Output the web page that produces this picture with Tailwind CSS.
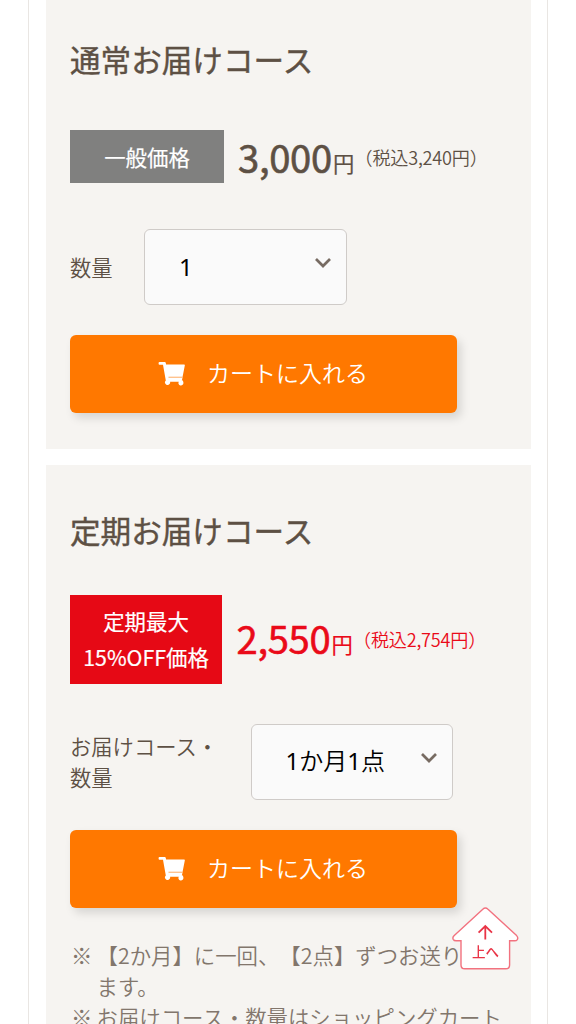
<!DOCTYPE html>
<html lang="ja">
<head>
    <meta charset="UTF-8">
    <meta name="viewport" content="width=device-width, initial-scale=1.0">
    <title>お届けコース</title>
    <script src="https://cdn.jsdelivr.net/npm/@tailwindcss/browser@4"></script>
</head>
<body class="bg-white text-[#5d5044] font-['Noto_Sans_CJK_JP',sans-serif] font-[350] [text-spacing-trim:space-all] overflow-hidden">
    <main class="h-[1024px] ml-7 w-[520px] border-x border-[#e9e6e3] px-[16.5px] overflow-hidden">
        <section class="h-[449px] bg-[#f6f4f1] pl-[24.5px] pt-[37px]">
            <h2 class="text-[30.6px] leading-[44px] font-normal [-webkit-text-stroke:0.4px_#5d5044] whitespace-nowrap">通常お届けコース</h2>
            <div class="flex items-center mt-[49px] h-[53px] whitespace-nowrap">
                <div class="w-[154px] h-[53px] pt-px bg-[#80807f] text-white text-[21.4px] font-normal [-webkit-text-stroke:0.2px_white] flex items-center justify-center">一般価格</div>
                <p class="ml-[14px] pt-2 flex items-baseline leading-[53px]">
                    <span class="w-[95px] text-[38.2px] font-normal tracking-[-0.3px] [-webkit-text-stroke:0.6px]">3,000</span>
                    <span class="w-[20.5px] text-[21.3px] font-normal relative -top-px [-webkit-text-stroke:0.2px]">円</span>
                    <span class="text-[18.1px] relative left-px -top-[8px] tracking-[-0.2px]">（税込3,240円）</span>
                </p>
            </div>
            <div class="flex items-center mt-[46px]">
                <label class="w-[74px] text-[21.3px] leading-[31px] pb-0.5">数量</label>
                <button class="w-[202.5px] h-[76px] bg-[#fafafa] border border-[#cfcbc8] rounded-[6px] pl-[34px] pr-[14px] flex items-center justify-between text-black text-2xl font-normal font-['Noto_Sans','Noto_Sans_CJK_JP',sans-serif]">
                    <span>1</span>
                    <svg class="w-[18px] h-[12px] mb-2" viewBox="0 0 18 12" fill="none" stroke="#776b62" stroke-width="2.7"><path d="M2 2l7 7 7-7"/></svg>
                </button>
            </div>
            <button class="mt-[30px] w-[387px] h-[78px] bg-[#ff7800] rounded-[6px] shadow-[4px_5px_10px_rgba(0,0,0,0.13)] text-white text-[23px] flex items-center pl-[88px]">
                <svg class="w-7 h-[25px] mr-[21px] mb-0.5" viewBox="0 0 28 25" fill="#fff"><path d="M1.5 1H6.8Q7.6 1 7.8 2L8.1 3.6H26.2Q27 3.6 26.8 4.6L24.8 14.8Q24.6 15.6 23.8 15.6H10.4L11 19H23.6Q25.5 19.4 25.4 21.7A2.5 2.5 0 1 1 20.8 20.7H12.1A2.6 2.6 0 1 1 7.8 19.4L5 3.8H1.5Q.6 3.8.6 2.8V1.9Q.6 1 1.5 1Z"/><path d="M9.7 15.3H24.8L24 19H10.4Z"/><path d="M10.5 16.4H24.4" stroke="#ff7800" stroke-width=".5"/></svg>
                <span class="pb-[3px]">カートに入れる</span>
            </button>
        </section>

        <section class="mt-4 h-[600px] bg-[#f6f4f1] pl-[24.5px] pt-[43px]">
            <h2 class="text-[30.6px] leading-[44px] font-normal [-webkit-text-stroke:0.4px_#5d5044] whitespace-nowrap">定期お届けコース</h2>
            <div class="flex items-center mt-[43px] h-[89px] whitespace-nowrap">
                <div class="w-[152px] h-[89px] pb-0.5 bg-[#e60915] text-white text-[21.4px] leading-[36px] font-normal [-webkit-text-stroke:0.2px_white] text-center flex flex-col justify-center">
                    <span>定期最大</span>
                    <span>15%OFF価格</span>
                </div>
                <p class="ml-[14.5px] pt-1 flex items-baseline leading-[53px] text-[#ea0a19]">
                    <span class="w-[95px] text-[38.2px] font-normal tracking-[-0.3px] [-webkit-text-stroke:0.6px]">2,550</span>
                    <span class="w-[20.5px] text-[21.3px] font-normal relative -top-px [-webkit-text-stroke:0.2px]">円</span>
                    <span class="text-[18.1px] relative left-px -top-[7px] tracking-[-0.2px]">（税込2,754円）</span>
                </p>
            </div>
            <div class="flex items-center mt-[40px]">
                <label class="w-[180.5px] text-[21.3px] leading-[31px] pb-0.5">お届けコース・<br>数量</label>
                <button class="w-[202.5px] h-[76px] bg-[#fafafa] border border-[#cfcbc8] rounded-[6px] pl-[34px] pr-[14px] pb-0.5 flex items-center justify-between text-black text-2xl font-normal font-['Noto_Sans','Noto_Sans_CJK_JP',sans-serif]">
                    <span>1<span class="font-[350]">か月</span>1<span class="font-[350]">点</span></span>
                    <svg class="w-[18px] h-[12px] mb-1.5" viewBox="0 0 18 12" fill="none" stroke="#776b62" stroke-width="2.7"><path d="M2 2l7 7 7-7"/></svg>
                </button>
            </div>
            <button class="mt-[30px] w-[387px] h-[78px] bg-[#ff7800] rounded-[6px] shadow-[4px_5px_10px_rgba(0,0,0,0.13)] text-white text-[23px] flex items-center pl-[88px]">
                <svg class="w-7 h-[25px] mr-[21px] mb-0.5" viewBox="0 0 28 25" fill="#fff"><path d="M1.5 1H6.8Q7.6 1 7.8 2L8.1 3.6H26.2Q27 3.6 26.8 4.6L24.8 14.8Q24.6 15.6 23.8 15.6H10.4L11 19H23.6Q25.5 19.4 25.4 21.7A2.5 2.5 0 1 1 20.8 20.7H12.1A2.6 2.6 0 1 1 7.8 19.4L5 3.8H1.5Q.6 3.8.6 2.8V1.9Q.6 1 1.5 1Z"/><path d="M9.7 15.3H24.8L24 19H10.4Z"/><path d="M10.5 16.4H24.4" stroke="#ff7800" stroke-width=".5"/></svg>
                <span class="pb-[3px]">カートに入れる</span>
            </button>
            <ul class="mt-[31px] text-[21.4px] leading-[31.2px] text-[#82766c] whitespace-nowrap">
                <li class="flex"><span class="w-[26.5px] pl-px">※</span><span>【2か月】に一回、【2点】ずつお送り<br>ます。</span></li>
                <li class="flex"><span class="w-[26.5px] pl-px">※</span><span>お届けコース・数量はショッピングカート</span></li>
            </ul>
        </section>
    </main>

    <!-- back to top -->
    <a href="#" class="fixed left-[452px] top-[907px] w-[67px] h-[63px]">
        <svg class="w-[67px] h-[63px]" viewBox="0 0 67 63"><path d="M30.8 2.3Q33.4-.2 36 2.3L64.6 28.6Q66.5 30.7 65.3 32.6 64.5 33.8 62.6 33.8H57.6V58Q57.6 61.8 53.8 61.8H12.8Q9 61.8 9 58V33.8H4.2Q2 33.8 1.2 32.3.3 30.5 2 28.8Z" fill="#fff" stroke="#f2727f" stroke-width="1.4"/><path d="M33.3 32.5V19.5M26.6 25.6L33.3 19 40 25.6" fill="none" stroke="#e93446" stroke-width="1.8"/></svg>
        <span class="absolute left-0 top-[34px] w-[67px] text-center text-[13.5px] leading-5 font-medium text-[#e93446]">上へ</span>
    </a>
</body>
</html>
